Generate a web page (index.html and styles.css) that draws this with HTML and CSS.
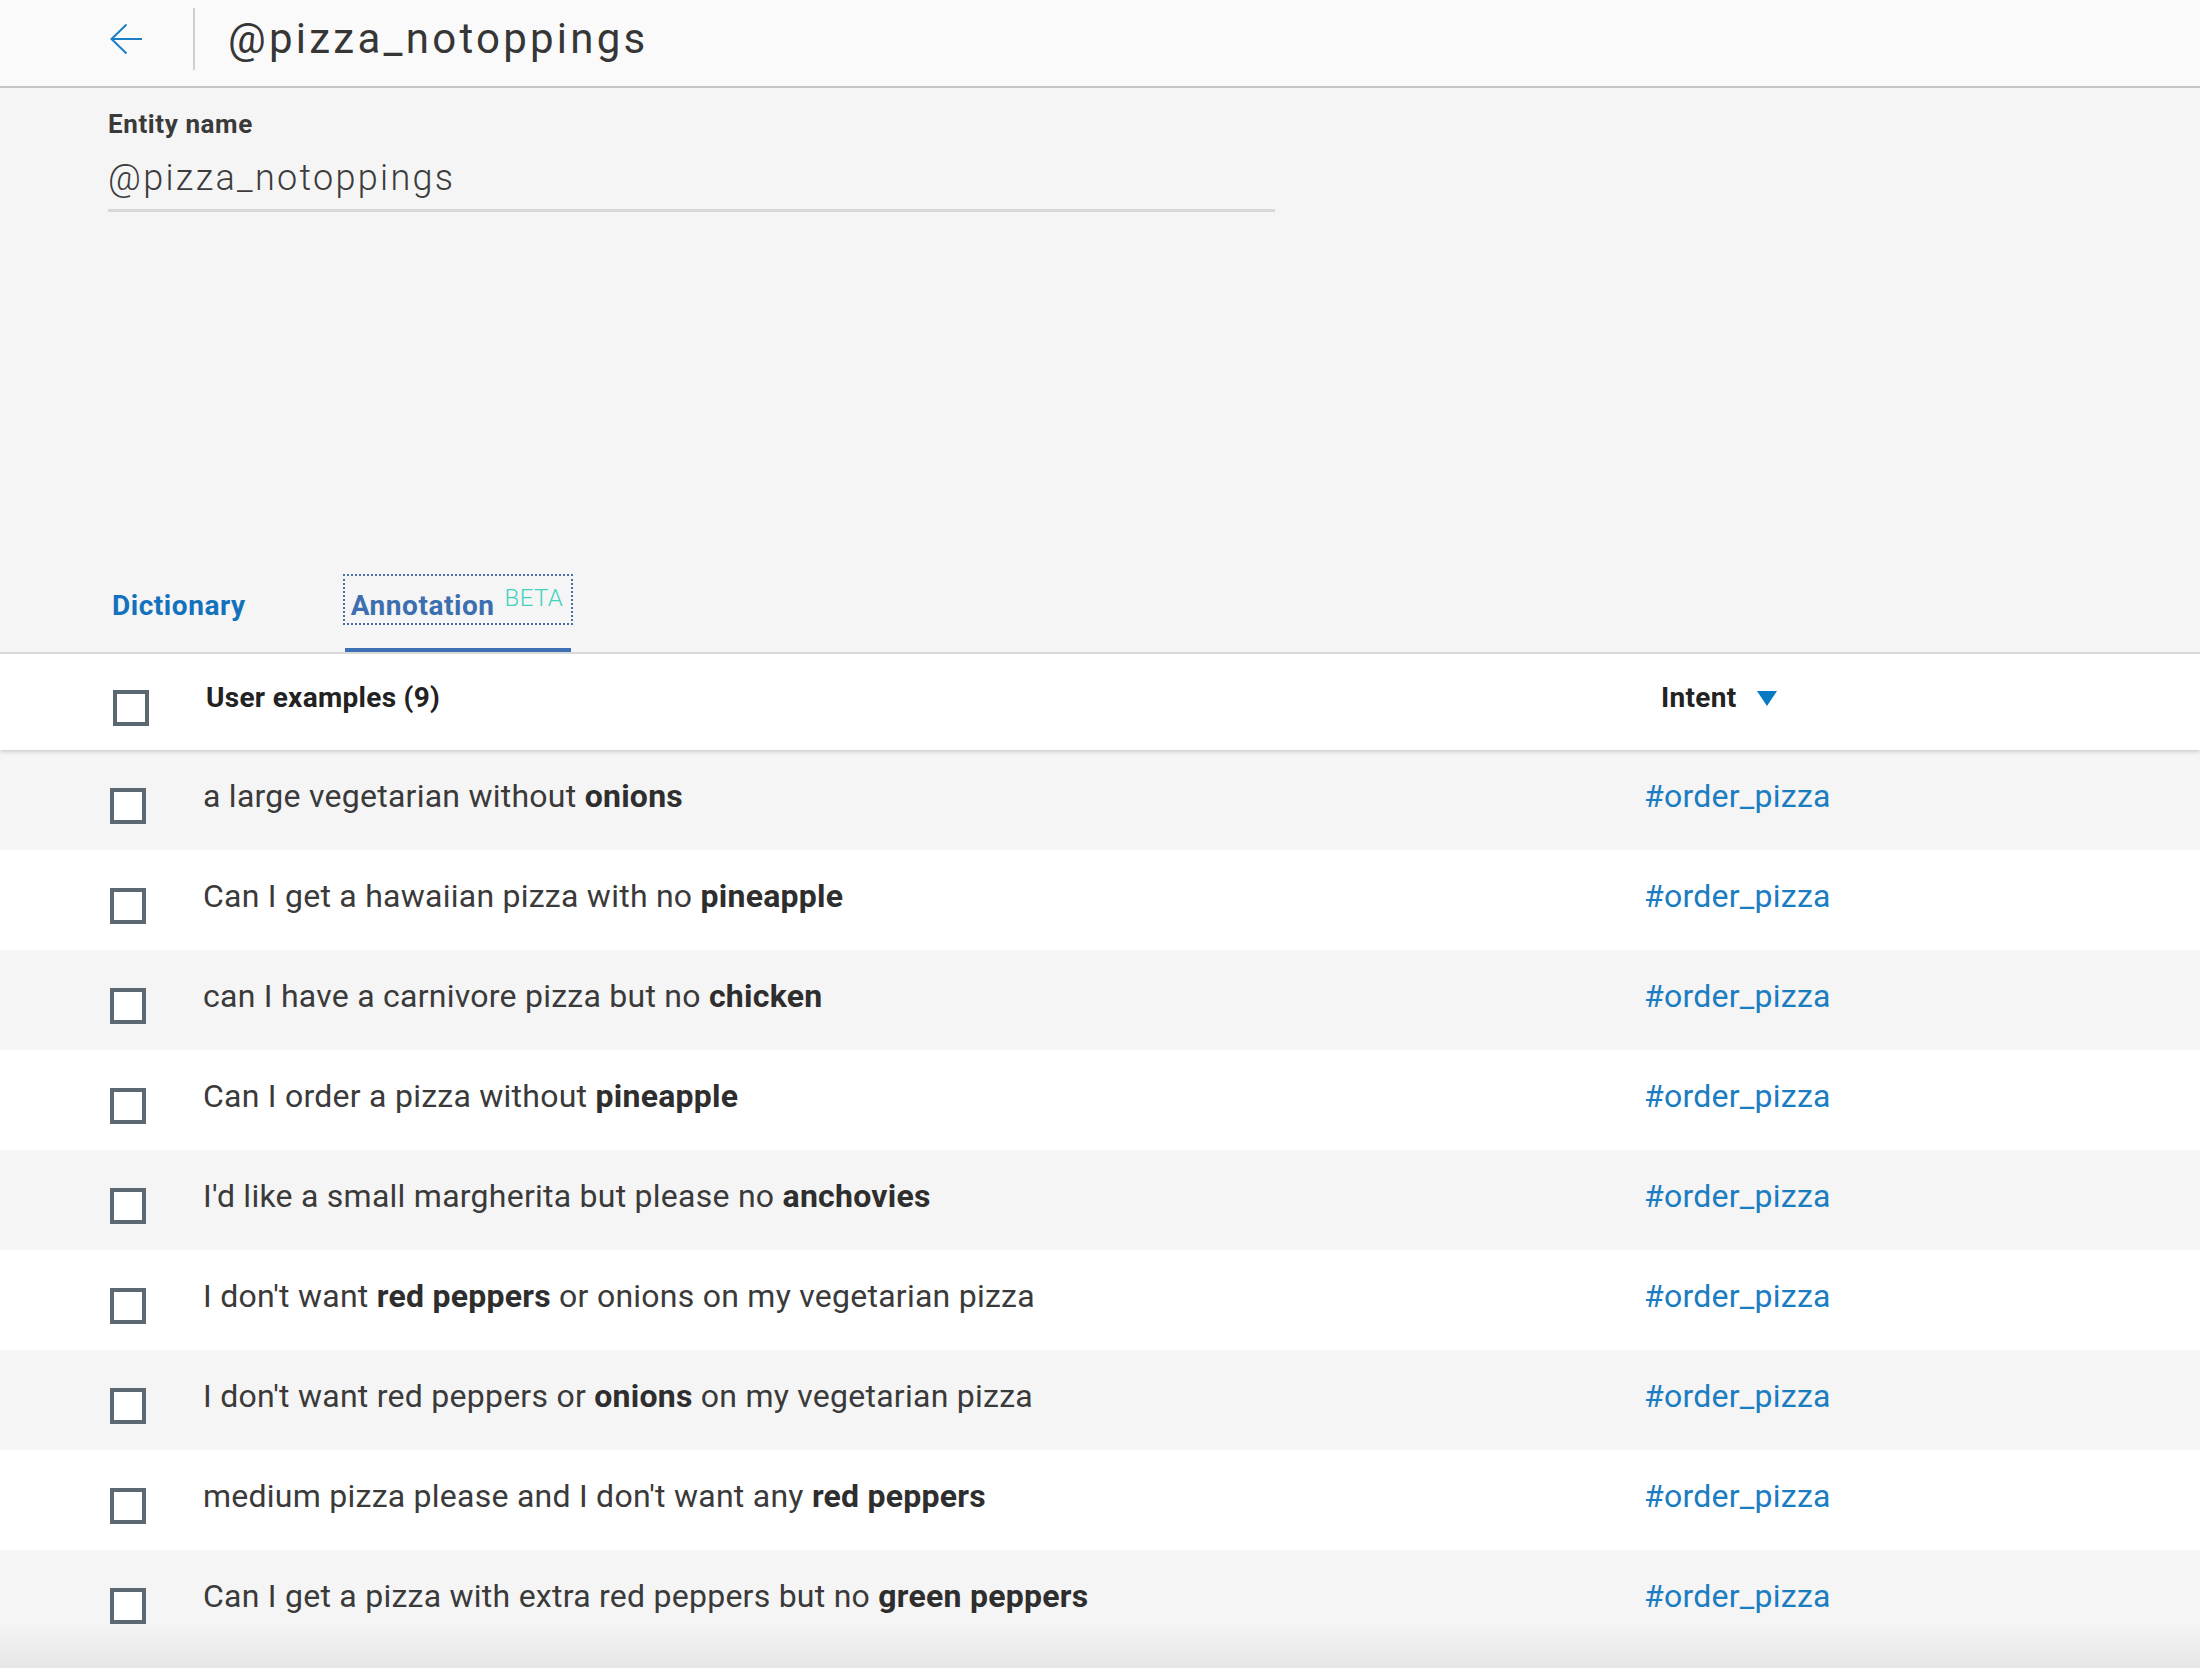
FILE: index.html
```html
<!DOCTYPE html>
<html lang="en">
<head>
<meta charset="utf-8">
<title>@pizza_notoppings</title>
<link rel="stylesheet" href="styles.css">
</head>
<body>
<div class="page">
  <header class="topbar">
    <svg class="back" width="32" height="32" viewBox="0 0 32 32" aria-hidden="true">
      <path d="M16.5 1.5 L1.5 16 L16.5 30.5 M1.5 16 H32" fill="none" stroke="#1a7fc4" stroke-width="2"/>
    </svg>
    <div class="divider"></div>
    <h1 class="title">@pizza_notoppings</h1>
  </header>

  <section class="entity">
    <div class="field-label">Entity name</div>
    <div class="field-input">@pizza_notoppings</div>
  </section>

  <nav class="tabs">
    <div class="tab"><span class="tab-label tab-dict">Dictionary</span></div>
    <div class="tab active"><span class="tab-label tab-anno focused">Annotation<span class="beta">BETA</span></span></div>
  </nav>

  <div class="table">
    <div class="thead">
      <div class="cell-check"><span class="checkbox"></span></div>
      <div class="th-text">User examples (9)</div>
      <div class="th-intent">Intent<span class="sort-tri"></span></div>
    </div>
    <div class="row odd">
      <div class="cell-check"><span class="checkbox"></span></div>
      <div class="example">a large vegetarian without <b>onions</b></div>
      <div class="intent">#order_pizza</div>
    </div>
    <div class="row">
      <div class="cell-check"><span class="checkbox"></span></div>
      <div class="example">Can I get a hawaiian pizza with no <b>pineapple</b></div>
      <div class="intent">#order_pizza</div>
    </div>
    <div class="row odd">
      <div class="cell-check"><span class="checkbox"></span></div>
      <div class="example">can I have a carnivore pizza but no <b>chicken</b></div>
      <div class="intent">#order_pizza</div>
    </div>
    <div class="row">
      <div class="cell-check"><span class="checkbox"></span></div>
      <div class="example">Can I order a pizza without <b>pineapple</b></div>
      <div class="intent">#order_pizza</div>
    </div>
    <div class="row odd">
      <div class="cell-check"><span class="checkbox"></span></div>
      <div class="example">I'd like a small margherita but please no <b>anchovies</b></div>
      <div class="intent">#order_pizza</div>
    </div>
    <div class="row">
      <div class="cell-check"><span class="checkbox"></span></div>
      <div class="example">I don't want <b>red peppers</b> or onions on my vegetarian pizza</div>
      <div class="intent">#order_pizza</div>
    </div>
    <div class="row odd">
      <div class="cell-check"><span class="checkbox"></span></div>
      <div class="example">I don't want red peppers or <b>onions</b> on my vegetarian pizza</div>
      <div class="intent">#order_pizza</div>
    </div>
    <div class="row">
      <div class="cell-check"><span class="checkbox"></span></div>
      <div class="example">medium pizza please and I don't want any <b>red peppers</b></div>
      <div class="intent">#order_pizza</div>
    </div>
    <div class="row odd">
      <div class="cell-check"><span class="checkbox"></span></div>
      <div class="example">Can I get a pizza with extra red peppers but no <b>green peppers</b></div>
      <div class="intent">#order_pizza</div>
    </div>
  </div>
  <div class="bottom-fade"></div>
</div>
</body>
</html>
```

FILE: styles.css
```css
* { box-sizing: border-box; }

html, body {
  margin: 0;
  padding: 0;
}

body {
  background: #f5f5f5;
  font-family: Roboto, "Liberation Sans", sans-serif;
  color: #3a3a3a;
  overflow: hidden;
}

.page {
  width: 2200px;
  min-height: 1668px;
}

/* top bar */
.topbar {
  display: flex;
  align-items: flex-start;
  height: 88px;
  background: #fafafa;
  border-bottom: 2px solid #c6c6c6;
  padding-left: 110px;
}

.back {
  display: block;
  margin-top: 23px;
  flex: none;
}

.divider {
  width: 2px;
  height: 62px;
  margin-top: 8px;
  margin-left: 51px;
  background: #cfcfcf;
  flex: none;
}

.title {
  margin: 18px 0 0 33px;
  font-size: 42px;
  line-height: 42px;
  font-weight: 400;
  letter-spacing: 3.25px;
  color: #363636;
}

/* entity name field */
.entity {
  padding-left: 108px;
  padding-top: 20px;
}

.field-label {
  font-size: 26px;
  line-height: 32px;
  font-weight: 700;
  letter-spacing: 0.6px;
  color: #3a3a3a;
}

.field-input {
  width: 1167px;
  margin-top: 16px;
  padding-bottom: 9px;
  font-size: 36px;
  line-height: 44px;
  font-weight: 300;
  letter-spacing: 2.3px;
  color: #3c3c3c;
  border-bottom: 3px solid #d8d8d8;
}

/* tabs */
.tabs {
  display: flex;
  align-items: flex-end;
  margin-top: 364px;
  padding-left: 106px;
  border-bottom: 2px solid #dcdcdc;
}

.tab {
  padding-bottom: 25px;
  border-bottom: 4px solid transparent;
}

.tab + .tab {
  margin-left: 91px;
}

.tab.active {
  border-bottom-color: #3d70b2;
}

.tab-label {
  display: block;
  padding: 14px 8px 1px 6px;
  font-size: 28px;
  line-height: 32px;
  font-weight: 700;
  letter-spacing: 0.55px;
}

.tab-dict { color: #1472bd; }
.tab-anno { color: #3d6fb0; }

.focused {
  outline: 2px dotted #4a6fa5;
}

.beta {
  margin-left: 10px;
  font-size: 24px;
  font-weight: 300;
  line-height: 0;
  letter-spacing: 0.4px;
  vertical-align: 9px;
  color: #3fd3bd;
}

/* table */
.table {
  position: relative;
}

.thead,
.row {
  display: grid;
  grid-template-columns: 93px 1441px 1fr;
  align-items: start;
}

.thead {
  position: relative;
  z-index: 1;
  height: 96px;
  padding-left: 113px;
  background: #ffffff;
  box-shadow: 0 2px 4px rgba(0, 0, 0, 0.16);
}

.checkbox {
  display: block;
  width: 36px;
  height: 36px;
  border: 4px solid #5a6872;
  background: #ffffff;
}

.thead .checkbox { margin-top: 36px; }

.th-text,
.th-intent {
  margin-top: 28px;
  font-size: 28px;
  line-height: 32px;
  font-weight: 700;
  letter-spacing: 0.3px;
  color: #222222;
}

.th-intent {
  display: flex;
  align-items: center;
  padding-left: 14px;
}

.sort-tri {
  width: 0;
  height: 0;
  margin-left: 21px;
  border-left: 10px solid transparent;
  border-right: 10px solid transparent;
  border-top: 15px solid #0a79c3;
}

.row {
  height: 100px;
  padding-left: 110px;
  background: #ffffff;
}

.row.odd { background: #f5f5f5; }

.row .checkbox { margin-top: 38px; }

.example,
.intent {
  margin-top: 26px;
  font-size: 32px;
  line-height: 40px;
  letter-spacing: 0.25px;
  white-space: nowrap;
}

.example { color: #3a3a3a; }

.example b {
  font-weight: 700;
  color: #2e2e2e;
}

.intent { color: #1a7cc1; }

.bottom-fade {
  position: fixed;
  left: 0;
  right: 0;
  bottom: 0;
  height: 46px;
  pointer-events: none;
  background: linear-gradient(to bottom, rgba(0, 0, 0, 0), rgba(0, 0, 0, 0.055));
}
```
